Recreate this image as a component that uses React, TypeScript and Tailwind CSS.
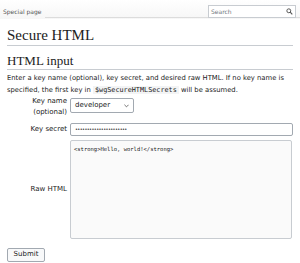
import React from 'react';

const App: React.FC = () => {
  return (
    <div className="relative w-[300px] h-[263px] bg-white text-[#222] overflow-hidden font-['DejaVu_Sans',sans-serif]">
      {/* Top bar */}
      <div className="h-[19px] flex items-end bg-gradient-to-b from-white to-[#f6f6f6]">
        <div className="pl-[3px] pr-[3px] pb-[4px] text-[6px] text-[#555] leading-none">Special page</div>
        <div className="flex-1 h-px bg-[#dcdcdc] mb-[1px]" />
      </div>
      <div className="absolute top-[5px] left-[208px] w-[88px] h-[13px] border border-[#c8ccd1] bg-white flex items-center justify-between px-[2px]">
        <span className="text-[6px] text-[#72777d] leading-none">Search</span>
        <svg width="7" height="7" viewBox="0 0 10 10" className="text-[#555]">
          <circle cx="4" cy="4" r="2.8" fill="none" stroke="currentColor" strokeWidth="1.4" />
          <path d="M6 6 L9 9" stroke="currentColor" strokeWidth="1.6" />
        </svg>
      </div>

      {/* Content */}
      <div className="px-[7px] pt-[9px]">
        <h1 className="font-['Liberation_Serif',serif] text-[15px] leading-[15px] pb-[2px] border-b border-[#c8ccd1]">Secure HTML</h1>
        <h2 className="mt-[8px] font-['Liberation_Serif',serif] text-[13px] leading-[13px] pb-[2px] border-b border-[#c8ccd1]">HTML input</h2>
        <p className="mt-[2px] text-[6.8px] leading-[12px]">
          Enter a key name (optional), key secret, and desired raw HTML. If no key name is specified, the first key in{' '}
          <code className="font-['DejaVu_Sans_Mono',monospace] bg-[#f3f4f5] px-[2px] text-[6.8px]">$wgSecureHTMLSecrets</code>{' '}
          will be assumed.
        </p>

        <div className="text-[7px]">
          <div className="flex items-start">
            <div className="w-[60px] text-right leading-[11px]">Key name<br />(optional)</div>
            <div className="ml-[3px] mt-[2px] w-[64px] h-[15px] border border-[#a2a9b1] rounded-[2px] flex items-center justify-between px-[4px] bg-white">
              <span className="leading-none">developer</span>
              <svg width="5" height="4" viewBox="0 0 6 4"><path d="M0.5 0.5 L3 3 L5.5 0.5" fill="none" stroke="#444" strokeWidth="0.9" /></svg>
            </div>
          </div>
          <div className="mt-[5px] flex items-center">
            <div className="w-[60px] text-right leading-none">Key secret</div>
            <div className="ml-[3px] w-[223px] h-[13px] border border-[#a2a9b1] rounded-[2px] flex items-center px-[4px] bg-white">
              <span className="text-[5px] tracking-[-0.6px] leading-none">••••••••••••••••••••••</span>
            </div>
          </div>
          <div className="mt-[4px] flex items-center">
            <div className="w-[60px] text-right leading-none">Raw HTML</div>
            <div className="ml-[3px] w-[222px] h-[99px] border border-[#c8ccd1] rounded-[2px] bg-[#fafafa] px-[3px] pt-[3px]">
              <span className="font-['DejaVu_Sans_Mono',monospace] text-[5.5px] leading-none">&lt;strong&gt;Hello, world!&lt;/strong&gt;</span>
            </div>
          </div>
        </div>

        <button className="mt-[3px] w-[38px] h-[14px] border border-[#a2a9b1] rounded-[2px] bg-[#f8f9fa] text-[7px] leading-none">Submit</button>
      </div>
    </div>
  );
};

export default App;
